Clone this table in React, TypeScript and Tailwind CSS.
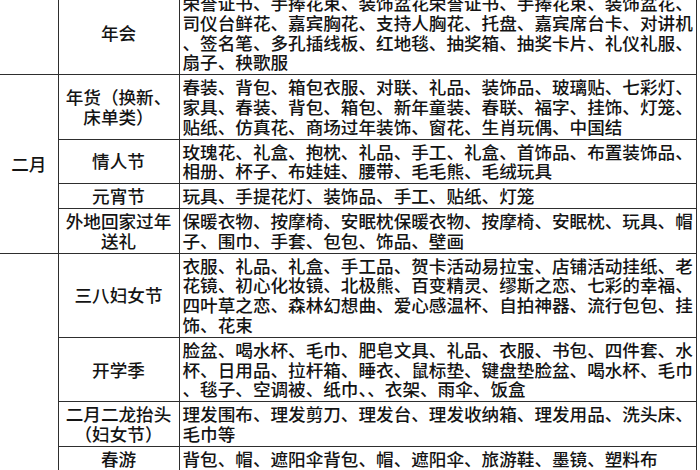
type Row = {
  label: string[];
  items: string[];
};

type Group = {
  month: string;
  rows: Row[];
};

const GROUPS: Group[] = [
  {
    month: "",
    rows: [
      {
        label: ["年会"],
        items: [
          "荣誉证书、手捧花束、装饰盆花荣誉证书、手捧花束、装饰盆花、",
          "司仪台鲜花、嘉宾胸花、支持人胸花、托盘、嘉宾席台卡、对讲机",
          "、签名笔、多孔插线板、红地毯、抽奖箱、抽奖卡片、礼仪礼服、",
          "扇子、秧歌服",
        ],
      },
    ],
  },
  {
    month: "二月",
    rows: [
      {
        label: ["年货（换新、", "床单类）"],
        items: [
          "春装、背包、箱包衣服、对联、礼品、装饰品、玻璃贴、七彩灯、",
          "家具、春装、背包、箱包、新年童装、春联、福字、挂饰、灯笼、",
          "贴纸、仿真花、商场过年装饰、窗花、生肖玩偶、中国结",
        ],
      },
      {
        label: ["情人节"],
        items: [
          "玫瑰花、礼盒、抱枕、礼品、手工、礼盒、首饰品、布置装饰品、",
          "相册、杯子、布娃娃、腰带、毛毛熊、毛绒玩具",
        ],
      },
      {
        label: ["元宵节"],
        items: ["玩具、手提花灯、装饰品、手工、贴纸、灯笼"],
      },
      {
        label: ["外地回家过年", "送礼"],
        items: [
          "保暖衣物、按摩椅、安眠枕保暖衣物、按摩椅、安眠枕、玩具、帽",
          "子、围巾、手套、包包、饰品、壁画",
        ],
      },
    ],
  },
  {
    month: "三月",
    rows: [
      {
        label: ["三八妇女节"],
        items: [
          "衣服、礼品、礼盒、手工品、贺卡活动易拉宝、店铺活动挂纸、老",
          "花镜、初心化妆镜、北极熊、百变精灵、缪斯之恋、七彩的幸福、",
          "四叶草之恋、森林幻想曲、爱心感温杯、自拍神器、流行包包、挂",
          "饰、花束",
        ],
      },
      {
        label: ["开学季"],
        items: [
          "脸盆、喝水杯、毛巾、肥皂文具、礼品、衣服、书包、四件套、水",
          "杯、日用品、拉杆箱、睡衣、鼠标垫、键盘垫脸盆、喝水杯、毛巾",
          "、毯子、空调被、纸巾、、衣架、雨伞、饭盒",
        ],
      },
      {
        label: ["二月二龙抬头", "（妇女节）"],
        items: [
          "理发围布、理发剪刀、理发台、理发收纳箱、理发用品、洗头床、",
          "毛巾等",
        ],
      },
      {
        label: ["春游"],
        items: ["背包、帽、遮阳伞背包、帽、遮阳伞、旅游鞋、墨镜、塑料布"],
      },
      // below the fold
      {
        label: ["植树节"],
        items: [
          "铁锹、水桶、手套、树苗、花种、花盆、喷壶、园艺工具、营养土",
          "、绿植、多肉植物、小盆栽",
          "",
        ],
      },
      {
        label: ["清明节"],
        items: [
          "鲜花、菊花、香烛、纸钱、风筝、雨伞、雨衣、雨鞋、背包、帽子",
          "、遮阳伞、旅游鞋、墨镜、塑料布、野餐垫、保温杯、零食、水果",
          "、相机、自拍杆",
          "",
        ],
      },
      {
        label: ["换季"],
        items: [
          "春装、衬衫、外套、卫衣、运动鞋、帆布鞋、丝巾、帽子、手提包",
          "、床品、四件套、薄被、枕头、窗帘、收纳箱、衣架、除湿袋、",
          "防晒霜、护肤品",
          "",
        ],
      },
    ],
  },
];

export default function App() {
  return (
    <div className="h-[470px] w-[700px] overflow-hidden bg-white">
      <table
        className="-mt-[10px] w-[697px] table-fixed border-collapse text-[17.6px] font-medium leading-[19.8px] text-[#141414]"
        style={{ fontFamily: '"Noto Sans CJK SC", "Noto Sans", sans-serif' }}
      >
        <colgroup>
          <col className="w-[58px]" />
          <col className="w-[121px]" />
          <col />
        </colgroup>
        <tbody>
          {GROUPS.map((group) =>
            group.rows.map((row, i) => (
              <tr key={`${group.month}-${row.label.join("")}`}>
                {i === 0 && (
                  <td
                    rowSpan={group.rows.length}
                    className="border border-l-0 border-[#2e2e2e] py-[2px] text-center align-middle"
                  >
                    {group.month}
                  </td>
                )}
                <td className="border border-[#2e2e2e] py-[2px] text-center align-middle">
                  {row.label.map((line) => (
                    <div key={line} className="whitespace-nowrap">
                      {line}
                    </div>
                  ))}
                </td>
                <td className="border border-[#2e2e2e] py-[2px] pl-[3px] align-middle">
                  {row.items.map((line, j) => (
                    <div key={j} className="h-[19.8px] whitespace-nowrap">
                      {line}
                    </div>
                  ))}
                </td>
              </tr>
            ))
          )}
        </tbody>
      </table>
    </div>
  );
}
